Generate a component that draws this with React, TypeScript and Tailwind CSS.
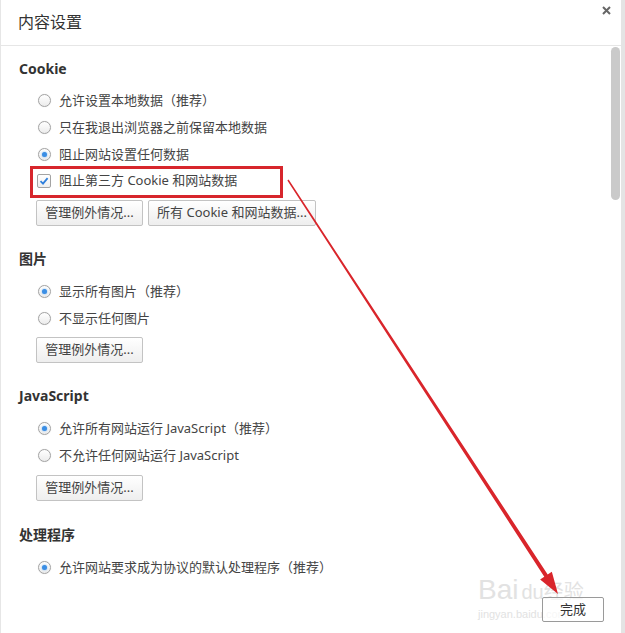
import React from "react";

const font = "font-['Noto_Sans','Noto_Sans_CJK_SC',sans-serif]";

function Radio({ checked }: { checked?: boolean }) {
  return (
    <span className="w-[13px] h-[13px] rounded-full border border-[#a3a3a3] bg-gradient-to-b from-white to-[#ececec] flex items-center justify-center shadow-[0_0_1px_rgba(0,0,0,0.15)]">
      {checked && <span className="w-[5px] h-[5px] rounded-full bg-[#3b8ee4] shadow-[0_0_2px_#6fb0f0]" />}
    </span>
  );
}

function RadioRow({ label, checked }: { label: string; checked?: boolean }) {
  return (
    <div className="h-[27px] flex items-center gap-[8px] pl-[37px]">
      <Radio checked={checked} />
      <span className="text-[13px] text-[#444]">{label}</span>
    </div>
  );
}

function Btn({ label, w }: { label: string; w: string }) {
  return (
    <button
      className={`h-[26px] ${w} rounded-[2px] border border-[#c3c3c3] bg-gradient-to-b from-white to-[#eeeeee] text-[13px] text-[#444] flex items-center justify-center`}
    >
      {label}
    </button>
  );
}

function Heading({ children, mt }: { children: React.ReactNode; mt: string }) {
  return <div className={`${mt} h-[20px] leading-[20px] pl-[18px] text-[14px] font-bold text-[#333]`}>{children}</div>;
}

export default function App() {
  return (
    <div className={`relative w-[625px] h-[633px] bg-white overflow-hidden flex ${font}`}>
      {/* 水印（在内容之下） */}
      <div className="absolute left-[478px] top-[576px] pointer-events-none text-[#e2e2e2] leading-none">
        <div className="flex items-end">
          <span className="text-[28px] font-['Liberation_Sans',sans-serif]">Bai</span>
          <span className="text-[20px] font-['Liberation_Sans',sans-serif] mb-[2px] ml-[3px]">du</span>
          <span className="text-[20px] mb-[2px]">经验</span>
        </div>
        <div className="text-[11px] mt-[5px] font-['Liberation_Sans',sans-serif]">jingyan.baidu.com</div>
      </div>

      <div className="relative flex-1 border-l border-[#e6e6e6] flex flex-col">
        {/* 标题栏 */}
        <div className="h-[46px] border-b border-[#e6e6e6] flex items-start justify-between pl-[17px] pr-[10px]">
          <span className="mt-[10px] text-[16px] leading-[24px] text-[#333]">内容设置</span>
          <svg className="mt-[6px]" width="9" height="9" viewBox="0 0 9 9">
            <path d="M1 1 L8 8 M8 1 L1 8" stroke="#666" strokeWidth="2" />
          </svg>
        </div>

        <div className="flex flex-col">
          <Heading mt="mt-[13px]">Cookie</Heading>
          <div className="mt-[8px]">
            <RadioRow label="允许设置本地数据（推荐）" />
            <RadioRow label="只在我退出浏览器之前保留本地数据" />
            <RadioRow label="阻止网站设置任何数据" checked />
            <div className="h-[26px] flex items-center gap-[8px] pl-[36px]">
              <span className="w-[14px] h-[14px] rounded-[2px] border border-[#a3a3a3] bg-gradient-to-b from-white to-[#eeeeee] flex items-center justify-center">
                <svg width="10" height="10" viewBox="0 0 10 10">
                  <path d="M1.5 5.2 L4 7.6 L8.6 2.2" fill="none" stroke="#2f7fdc" strokeWidth="1.8" />
                </svg>
              </span>
              <span className="text-[13px] text-[#444]">阻止第三方 Cookie 和网站数据</span>
            </div>
          </div>
          <div className="mt-[6px] pl-[35px] flex gap-[5px]">
            <Btn label="管理例外情况..." w="w-[107px]" />
            <Btn label="所有 Cookie 和网站数据..." w="w-[168px]" />
          </div>

          <Heading mt="mt-[23px]">图片</Heading>
          <div className="mt-[9px]">
            <RadioRow label="显示所有图片（推荐）" checked />
            <RadioRow label="不显示任何图片" />
          </div>
          <div className="mt-[5px] pl-[35px] flex">
            <Btn label="管理例外情况..." w="w-[107px]" />
          </div>

          <Heading mt="mt-[23px]">JavaScript</Heading>
          <div className="mt-[9px]">
            <RadioRow label="允许所有网站运行 JavaScript（推荐）" checked />
            <RadioRow label="不允许任何网站运行 JavaScript" />
          </div>
          <div className="mt-[6px] pl-[35px] flex">
            <Btn label="管理例外情况..." w="w-[107px]" />
          </div>

          <Heading mt="mt-[24px]">处理程序</Heading>
          <div className="mt-[9px]">
            <RadioRow label="允许网站要求成为协议的默认处理程序（推荐）" checked />
          </div>

          <div className="mt-[16px] flex justify-end pr-[17px]">
            <button className="h-[25px] w-[62px] rounded-[2px] border border-[#9a9a9a] bg-white/70 text-[13px] text-[#333]">
              完成
            </button>
          </div>
        </div>
      </div>
      <div className="w-[4px] bg-[#e4e4e4]" />

      {/* 滚动条 */}
      <div className="absolute left-[611px] top-[47px] w-[9px] h-[153px] rounded-full bg-[#cacaca]" />

      {/* 标注红框 */}
      <div className="absolute left-[30px] top-[166px] w-[253px] h-[32px] border-[3px] border-[#d7262c]" />

      {/* 箭头 */}
      <svg className="absolute left-0 top-0 pointer-events-none" width="625" height="633" viewBox="0 0 625 633">
        <polygon
          points="288.63,179.59 547.66,574.48 551.84,571.75 558,594 540.12,579.39 544.31,576.66 287.37,180.41"
          fill="#d9252b"
        />
      </svg>
    </div>
  );
}
